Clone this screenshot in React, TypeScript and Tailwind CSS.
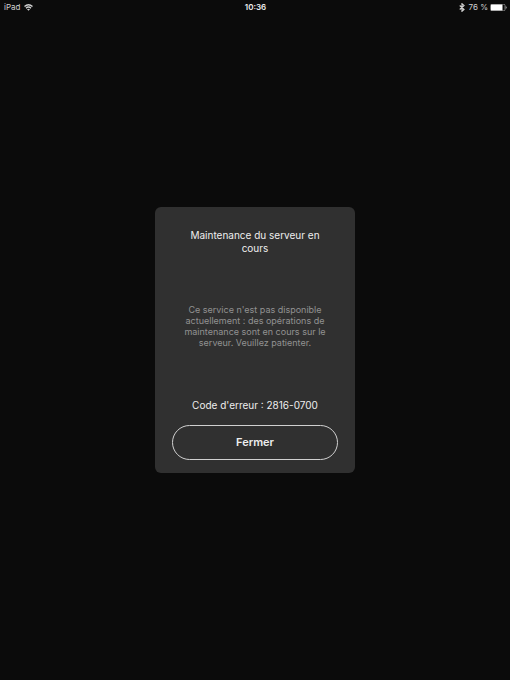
export default function App() {
  return (
    <div className="flex min-h-screen flex-col bg-[#0b0b0b] font-[Inter,sans-serif] text-[#eeeeee]">
      <header className="grid h-[14px] grid-cols-3 items-center pl-1 pr-[3px] text-[8px] leading-[14px] text-[#d0d0d0]">
        <div className="flex items-center gap-1">
          <span>iPad</span>
          <svg width="9" height="7" viewBox="0 0 18 14" fill="none" stroke="currentColor" strokeWidth="2.8" aria-hidden="true">
            <path d="M1 5 Q9 -2 17 5M4 8.4 Q9 4 14 8.4" />
            <path d="M6 10.5 Q9 8 12 10.5 L9 13.5Z" fill="currentColor" stroke="none" />
          </svg>
        </div>
        <time className="text-center font-semibold text-[#eeeeee]">10:36</time>
        <div className="flex items-center justify-end gap-[2px]">
          <svg className="mr-[2px]" width="6" height="9" viewBox="0 0 12 18" fill="none" stroke="currentColor" strokeWidth="2.4" aria-hidden="true">
            <path d="M1.5 5 L10 13 L6 16.5 V1.5 L10 5 L1.5 13" />
          </svg>
          <span>76 %</span>
          <svg width="17" height="7" viewBox="0 0 34 14" aria-hidden="true">
            <rect x="1" y="0.5" width="29" height="13" rx="2.5" fill="none" stroke="#bbb" strokeWidth="1.2" />
            <rect x="2" y="1" width="23" height="12" rx="1" fill="#fff" />
            <path d="M31.5 4 Q35 7 31.5 10Z" fill="#ccc" />
          </svg>
        </div>
      </header>
      <main className="flex flex-1 items-center justify-center pb-[14px]">
        <section role="dialog" aria-labelledby="title" className="flex w-[200px] flex-col rounded-md bg-[#303030] px-[17px] pb-[13px] pt-[22px] text-center">
          <h1 id="title" className="px-4 text-[10px] leading-[13px]">Maintenance du serveur en cours</h1>
          <p className="mt-[49px] px-2 text-[9px] leading-[11px] text-[#929292]">
            Ce service n'est pas disponible actuellement : des opérations de maintenance sont en cours sur le serveur. Veuillez patienter.
          </p>
          <p className="mt-[51px] text-[10px] leading-[13px]">Code d'erreur : 2816-0700</p>
          <button type="button" className="mt-[13px] h-[35px] rounded-full border border-[#d0d0d0] text-[11px] font-semibold">Fermer</button>
        </section>
      </main>
    </div>
  );
}
